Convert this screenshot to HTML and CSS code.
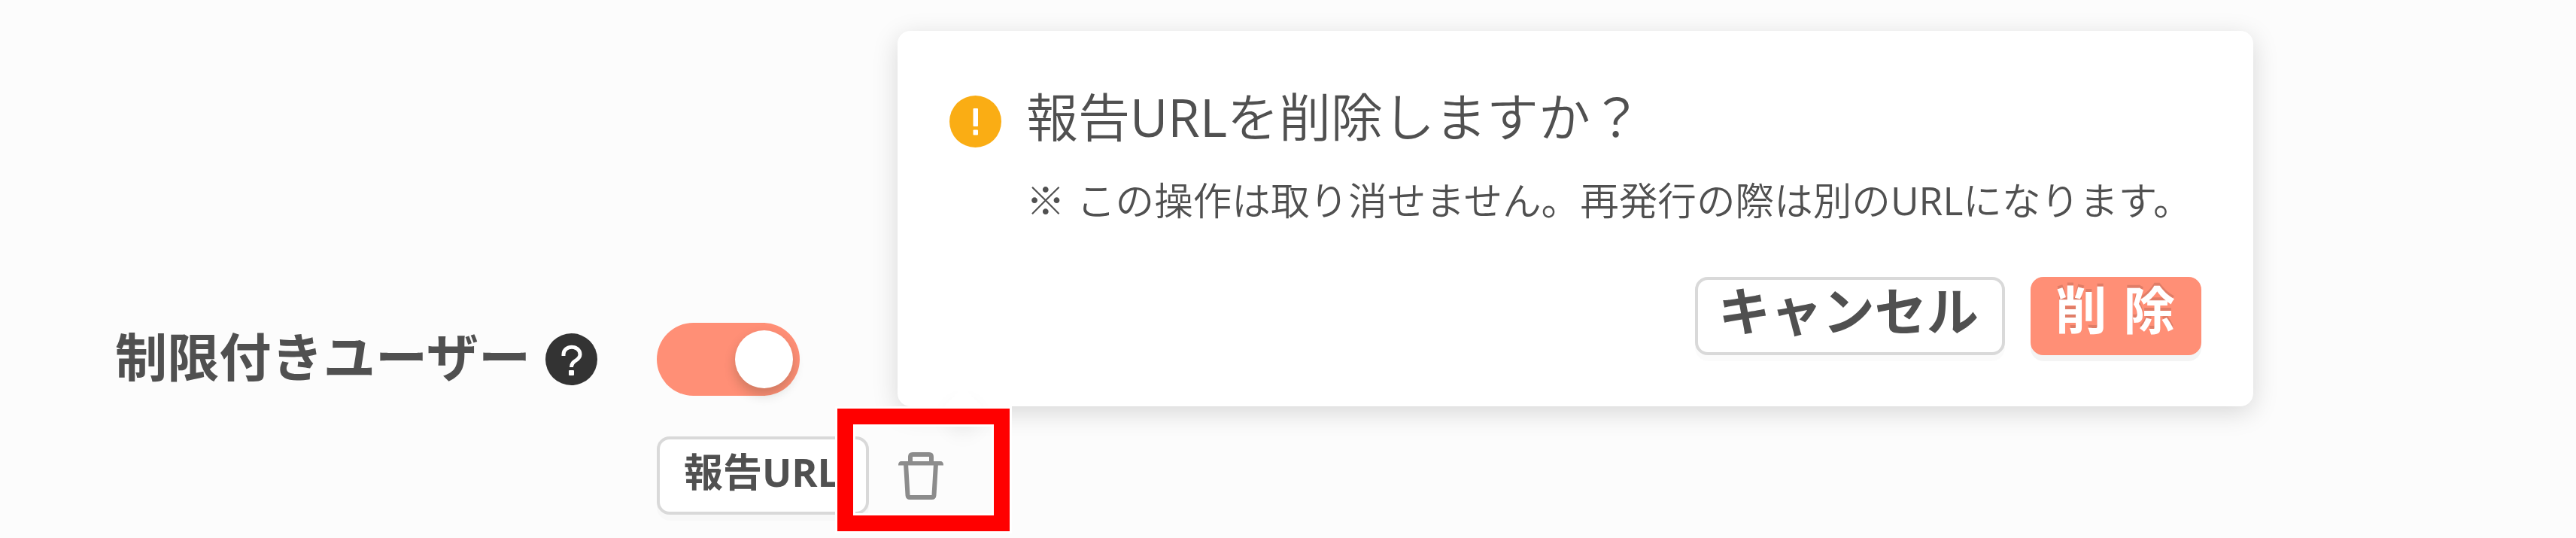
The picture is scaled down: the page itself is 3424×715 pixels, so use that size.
FILE: index.html
```html
<!DOCTYPE html>
<html lang="ja">
<head>
  <meta charset="UTF-8">
  <title>制限付きユーザー</title>
  <link rel="stylesheet" href="styles.css">
</head>
<body>
  <div class="settings">
    <div class="row">
      <div class="label">制限付きユーザー</div>
      <svg class="help" viewBox="0 0 69 69">
        <circle cx="34.5" cy="34.5" r="34.5" fill="#333"/>
        <path d="M24 30V28C24 15 46 15 46 28C46 37 34.500 35 34.500 45" fill="none" stroke="#fff" stroke-width="5"/>
        <rect x="31" y="49" width="7" height="7" rx="1" fill="#fff"/>
      </svg>
      <div class="switch"><span class="knob"></span></div>
    </div>
    <div class="row row-url">
      <button class="btn btn-url">報告URL</button>
      <svg class="trash" viewBox="0 0 60 63">
        <g fill="none" stroke="#8c8c8c" stroke-width="6" stroke-linejoin="round">
          <path d="M16 14V6Q16 3 19 3H41Q44 3 44 6V14"/>
          <path d="M10 15L12.500 57Q12.700 60 15.500 60H44.500Q47.300 60 47.500 57L50 15"/>
        </g>
        <path d="M0 17.500Q0 12 4 12H56Q60 12 60 17.500Z" fill="#8c8c8c"/>
      </svg>
    </div>
  </div>

  <div class="popover">
    <div class="popover-message">
      <svg class="warn" viewBox="0 0 69 69">
        <circle cx="34.5" cy="34.5" r="34.5" fill="#faad14"/>
        <rect x="31.5" y="17" width="6.500" height="24" rx="1" fill="#fff"/>
        <rect x="31.5" y="45.500" width="6.500" height="7" rx="1" fill="#fff"/>
      </svg>
      <div>
        <div class="popover-title">報告<span class="latin">URL</span>を削除しますか？</div>
        <div class="popover-note">※ この操作は取り消せません。再発行の際は別の<span class="latin">URL</span>になります。</div>
      </div>
    </div>
    <div class="popover-buttons">
      <button class="btn btn-cancel">キャンセル</button>
      <button class="btn btn-delete">削除</button>
    </div>
  </div>

  <div class="highlight"></div>
</body>
</html>
```

FILE: styles.css
```css
* {
  box-sizing: border-box;
}
body {
  margin: 0;
  width: 3424px;
  height: 715px;
  overflow: hidden;
  position: relative;
  background-color: #fcfcfc;
  color: #505050;
  font-family: "Open Sans", "Noto Sans CJK JP", sans-serif;
}
.settings {
  padding: 429px 0 0 153px;
}
.row {
  display: flex;
  align-items: center;
  height: 97px;
}
.label {
  width: 552px;
  padding-bottom: 7px;
  font-size: 69.2px;
  font-weight: bold;
  line-height: 90px;
  white-space: nowrap;
}
.help {
  width: 69px;
  height: 69px;
  margin: 0 79px 0 20px;
}
.switch {
  display: flex;
  justify-content: flex-end;
  width: 190px;
  height: 97px;
  padding: 10px 9px;
  border-radius: 49px;
  background-color: #ff8f76;
}
.knob {
  width: 77px;
  height: 77px;
  border-radius: 50%;
  background-color: #fff;
  box-shadow: 0 8px 16px rgba(0, 35, 11, 0.2);
}
.row-url {
  height: 104px;
  margin-top: 54px;
  padding-left: 720px;
}
.btn {
  display: flex;
  align-items: flex-start;
  justify-content: center;
  height: 104px;
  margin: 0;
  padding: 0;
  border: 4px solid #d9d9d9;
  border-radius: 17px;
  background-color: #fff;
  color: #505050;
  font-family: inherit;
  font-weight: bold;
  white-space: nowrap;
  box-shadow: 0 8px 0 rgba(0, 0, 0, 0.016);
}
.btn-url {
  width: 282px;
  padding-right: 3px;
  font-size: 52px;
  line-height: 85px;
}
.trash {
  width: 60px;
  height: 63px;
  margin-left: 39px;
}
.popover {
  position: absolute;
  left: 1193px;
  top: 41px;
  width: 1802px;
  height: 499px;
  padding: 69px 69px 0;
  border-radius: 17px;
  background-color: #fff;
  box-shadow: 0 8px 34px rgba(0, 0, 0, 0.15);
}
.popover::after {
  content: "";
  position: absolute;
  left: 70px;
  bottom: -16px;
  width: 34px;
  height: 34px;
  background-color: #fff;
  transform: rotate(45deg);
  box-shadow: 12px 12px 28px rgba(0, 0, 0, 0.07);
}
.popover-message {
  display: flex;
  gap: 33px;
  height: 258px;
}
.warn {
  width: 69px;
  height: 69px;
  margin-top: 17px;
}
.popover-title {
  height: 102px;
  font-size: 69px;
  font-weight: 350;
  line-height: 90px;
  white-space: nowrap;
}
.popover-note {
  font-size: 51.6px;
  font-weight: 350;
  line-height: 108px;
  word-spacing: 2px;
  white-space: nowrap;
}
.latin {
  font-weight: 400;
}
.popover-buttons {
  display: flex;
  justify-content: flex-end;
  gap: 34px;
}
.btn-cancel {
  width: 412px;
  padding-right: 4px;
  font-size: 69.2px;
  line-height: 82px;
}
.btn-delete {
  width: 227px;
  padding-left: 20px;
  border-color: #ff8f76;
  background-color: #ff8f76;
  color: #fff;
  font-size: 68.6px;
  line-height: 80px;
  letter-spacing: 22px;
  text-shadow: 0 -4px 0 rgba(0, 0, 0, 0.12);
  box-shadow: 0 8px 0 rgba(0, 0, 0, 0.043);
}
.highlight {
  position: absolute;
  left: 1113px;
  top: 543px;
  width: 229px;
  height: 163px;
  border: 21px solid #f00;
  box-shadow: 0 0 0 3px #fff, inset 0 0 0 3px #fff;
}
```
